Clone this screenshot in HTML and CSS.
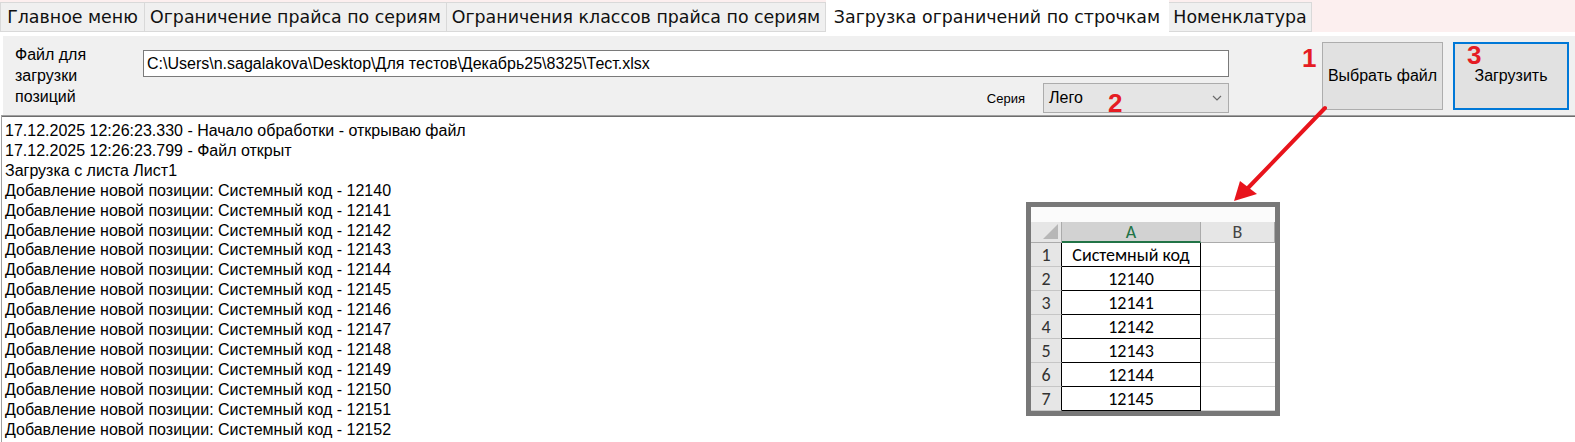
FILE: index.html
```html
<!DOCTYPE html>
<html lang="ru">
<head>
<meta charset="utf-8">
<title>Загрузка ограничений по строчкам</title>
<link rel="stylesheet" href="styles.css">
</head>
<body>
<div class="tabbar">
  <div class="tab w1">Главное меню</div>
  <div class="tab w2">Ограничение прайса по сериям</div>
  <div class="tab w3">Ограничения классов прайса по сериям</div>
  <div class="tab w4 active">Загрузка ограничений по строчкам</div>
  <div class="tab w5">Номенклатура</div>
</div>
<div class="page">
  <div class="panel">
    <div class="file-label">Файл для<br>загрузки<br>позиций</div>
    <div class="fields">
      <div class="path">C:\Users\n.sagalakova\Desktop\Для тестов\Декабрь25\8325\Тест.xlsx</div>
      <div class="series-row">
        <span class="series-label">Серия</span>
        <div class="combo"><span>Лего</span>
          <svg class="chev" width="10" height="6" viewBox="0 0 10 6"><polyline points="1,1 5,5 9,1" fill="none" stroke="#6a6a6a" stroke-width="1.2"/></svg>
        </div>
      </div>
    </div>
    <div class="btn btn-pick">Выбрать файл</div>
    <div class="btn btn-load">Загрузить</div>
  </div>
  <div class="log">
    <div>17.12.2025 12:26:23.330 - Начало обработки - открываю файл</div>
    <div>17.12.2025 12:26:23.799 - Файл открыт</div>
    <div>Загрузка с листа Лист1</div>
    <div>Добавление новой позиции: Системный код - 12140</div>
    <div>Добавление новой позиции: Системный код - 12141</div>
    <div>Добавление новой позиции: Системный код - 12142</div>
    <div>Добавление новой позиции: Системный код - 12143</div>
    <div>Добавление новой позиции: Системный код - 12144</div>
    <div>Добавление новой позиции: Системный код - 12145</div>
    <div>Добавление новой позиции: Системный код - 12146</div>
    <div>Добавление новой позиции: Системный код - 12147</div>
    <div>Добавление новой позиции: Системный код - 12148</div>
    <div>Добавление новой позиции: Системный код - 12149</div>
    <div>Добавление новой позиции: Системный код - 12150</div>
    <div>Добавление новой позиции: Системный код - 12151</div>
    <div>Добавление новой позиции: Системный код - 12152</div>
  </div>
</div>

<span class="mark m1">1</span>
<span class="mark m2">2</span>
<span class="mark m3">3</span>

<svg class="arrow" width="120" height="110" viewBox="0 0 120 110">
  <path d="M105 8 L27 89" stroke="#e8141c" stroke-width="4" stroke-linecap="round" fill="none"/>
  <polygon points="14,101 20,81 37,94" fill="#e8141c"/>
</svg>

<div class="xl">
  <div class="xl-top"></div>
  <div class="xl-corner"></div>
  <div class="xl-ch sel">A</div>
  <div class="xl-ch">B</div>
  <div class="xl-rh">1</div><div class="xl-a">Системный код</div><div class="xl-b"></div>
  <div class="xl-rh">2</div><div class="xl-a">12140</div><div class="xl-b"></div>
  <div class="xl-rh">3</div><div class="xl-a">12141</div><div class="xl-b"></div>
  <div class="xl-rh">4</div><div class="xl-a">12142</div><div class="xl-b"></div>
  <div class="xl-rh">5</div><div class="xl-a">12143</div><div class="xl-b"></div>
  <div class="xl-rh">6</div><div class="xl-a">12144</div><div class="xl-b"></div>
  <div class="xl-rh">7</div><div class="xl-a">12145</div><div class="xl-b"></div>
</div>
</body>
</html>
```

FILE: styles.css
```css
* { box-sizing: border-box; }

body {
  margin: 0;
  width: 1575px;
  height: 442px;
  overflow: hidden;
  position: relative;
  background: #fff;
  color: #000;
  font-family: "Liberation Sans", Arial, sans-serif;
}

/* Tabs */
.tabbar {
  display: flex;
  align-items: flex-end;
  height: 32px;
  background: #fcefef;
}
.tab {
  height: 30px;
  display: flex;
  align-items: center;
  justify-content: center;
  background: #f0f0f0;
  border: 1px solid #d9d9d9;
  border-left: none;
  font-family: "DejaVu Sans", sans-serif;
  font-size: 17.4px;
  color: #111;
  white-space: nowrap;
}
.tab:first-child { border-left: 1px solid #d9d9d9; }
.tab.active {
  height: 32px;
  background: #fff;
  border-color: #fff;
  border-bottom: none;
}
.w1 { width: 145px; }
.w2 { width: 302px; }
.w3 { width: 379px; }
.w4 { width: 343px; }
.w5 { width: 143px; }

/* Page */
.page { padding-top: 4px; }

.panel {
  display: flex;
  height: 79px;
  margin-left: 3px;
  background: #f0f0f0;
}
.file-label {
  width: 140px;
  padding: 8px 0 0 12px;
  font-size: 16px;
  line-height: 21px;
}
.fields {
  width: 1086px;
  padding-top: 14px;
  display: flex;
  flex-direction: column;
  gap: 6px;
}
.path {
  height: 27px;
  border: 1px solid #7a7a7a;
  background: #fff;
  font-size: 16px;
  line-height: 25px;
  padding-left: 3px;
  white-space: nowrap;
}
.series-row {
  display: flex;
  justify-content: flex-end;
  align-items: center;
  gap: 18px;
}
.series-label { font-size: 13px; }
.combo {
  width: 186px;
  height: 30px;
  border: 1px solid #acacac;
  background: #e5e5e5;
  display: flex;
  align-items: center;
  justify-content: space-between;
  padding: 0 6px 0 5px;
  font-size: 16px;
}
.chev { display: block; }

.btn {
  margin-top: 6px;
  height: 68px;
  background: #e1e1e1;
  border: 1px solid #adadad;
  display: flex;
  align-items: center;
  justify-content: center;
  font-size: 16px;
}
.btn-pick { width: 121px; margin-left: 93px; }
.btn-load { width: 116px; margin-left: 10px; border: 2px solid #0078d7; }

/* Log */
.log {
  margin-left: 1px;
  height: 327px;
  border-top: 1px solid #a0a0a0;
  border-left: 1px solid #a0a0a0;
  box-shadow: inset 0 1px 0 #6d6d6d;
  padding: 5px 0 0 3px;
  font-size: 16px;
  line-height: 19.9px;
  white-space: nowrap;
  overflow: hidden;
}

/* Annotations */
.mark {
  position: absolute;
  font: bold 26px/26px "Liberation Sans", Arial, sans-serif;
  color: #e51c23;
}
.m1 { left: 1302px; top: 45px; }
.m2 { left: 1108px; top: 90px; }
.m3 { left: 1467px; top: 42px; }

.arrow {
  position: absolute;
  left: 1220px;
  top: 100px;
}

/* Excel snippet */
.xl {
  position: absolute;
  left: 1026px;
  top: 202px;
  border: 5px solid #787878;
  background: #fff;
  display: grid;
  grid-template-columns: 31px 139px 74px;
  grid-template-rows: 15px 21px repeat(7, 24px);
  font-family: Carlito, Lato, "Open Sans", sans-serif;
  font-size: 18px;
}
.xl-top { grid-column: 1 / 4; background: #fbfbfb; }
.xl-corner {
  position: relative;
  background: #e6e6e6;
  border-right: 1px solid #ababab;
  border-bottom: 1px solid #ababab;
}
.xl-corner::after {
  content: "";
  position: absolute;
  right: 3px;
  bottom: 3px;
  border-style: solid;
  border-width: 0 0 15px 15px;
  border-color: transparent transparent #b7b7b7 transparent;
}
.xl-ch {
  display: flex;
  align-items: center;
  justify-content: center;
  background: #e6e6e6;
  border-right: 1px solid #ababab;
  border-bottom: 1px solid #ababab;
  color: #444;
}
.xl-ch.sel {
  background: #d2d2d2;
  color: #217346;
  border-bottom: 2px solid #217346;
}
.xl-rh {
  display: flex;
  align-items: center;
  justify-content: center;
  background: #e6e6e6;
  border-right: 1px solid #000;
  border-bottom: 1px solid #c6c6c6;
  color: #333;
}
.xl-a {
  display: flex;
  align-items: center;
  justify-content: center;
  border-right: 1px solid #000;
  border-bottom: 1px solid #000;
}
.xl-b { border-bottom: 1px solid #d4d4d4; }
```
